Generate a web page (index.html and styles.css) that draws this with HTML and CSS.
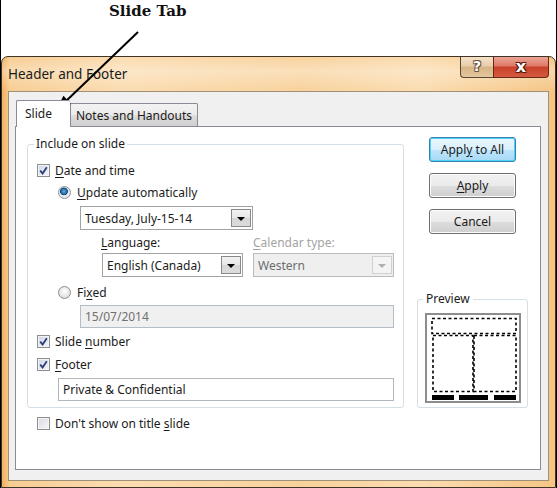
FILE: index.html
```html
<!DOCTYPE html>
<html>
<head>
<meta charset="utf-8">
<link rel="stylesheet" href="styles.css">
</head>
<body>
<div class="page">
  <div class="callout">Slide Tab</div>
  <div class="dialog">
    <div class="titlebar">
      <span class="title">Header and Footer</span>
      <div class="capbtns">
        <div class="capbtn help">?</div>
        <div class="capbtn close">x</div>
      </div>
    </div>
    <div class="client">
      <div class="tabs">
        <div class="tab active">Slide</div>
        <div class="tab">Notes and Handouts</div>
      </div>
      <div class="panel">
        <div class="leftcol">
          <fieldset class="group include">
            <legend>Include on slide</legend>
            <div class="row r-date"><span class="cb checked"><svg viewBox="0 0 9 9"><path d="M1.2 4.6 L3.6 7.4 L7.8 1.2" fill="none" stroke="#2b3f74" stroke-width="1.8"/></svg></span><span><u>D</u>ate and time</span></div>
            <div class="row indent r-update"><span class="rb selected"></span><span><u>U</u>pdate automatically</span></div>
            <div class="combo c-date"><span class="ctext">Tuesday, July-15-14</span><span class="cbtn"><i class="tri"></i></span></div>
            <div class="langgrid">
              <div class="lbl"><u>L</u>anguage:</div>
              <div class="lbl disabled"><u>C</u>alendar type:</div>
              <div class="combo"><span class="ctext">English (Canada)</span><span class="cbtn"><i class="tri"></i></span></div>
              <div class="combo disabled"><span class="ctext">Western</span><span class="cbtn"><i class="tri"></i></span></div>
            </div>
            <div class="row indent r-fixed"><span class="rb"></span><span>Fi<u>x</u>ed</span></div>
            <div class="textbox disabled t-fixed"><span>15/07/2014</span></div>
            <div class="row r-num"><span class="cb checked"><svg viewBox="0 0 9 9"><path d="M1.2 4.6 L3.6 7.4 L7.8 1.2" fill="none" stroke="#2b3f74" stroke-width="1.8"/></svg></span><span>Slide <u>n</u>umber</span></div>
            <div class="row r-footer"><span class="cb checked"><svg viewBox="0 0 9 9"><path d="M1.2 4.6 L3.6 7.4 L7.8 1.2" fill="none" stroke="#2b3f74" stroke-width="1.8"/></svg></span><span><u>F</u>ooter</span></div>
            <div class="textbox t-footer"><span>Private &amp; Confidential</span></div>
          </fieldset>
          <div class="row r-dont"><span class="cb"></span><span>Don't show on title <u>s</u>lide</span></div>
        </div>
        <div class="rightcol">
          <div class="btn default"><span>Appl<u>y</u> to All</span></div>
          <div class="btn"><span><u>A</u>pply</span></div>
          <div class="btn"><span>Cancel</span></div>
          <fieldset class="group preview">
            <legend>Preview</legend>
            <div class="pbox">
              <svg width="92" height="86" viewBox="0 0 92 86">
                <g fill="none" stroke="#000" stroke-width="1.6" stroke-dasharray="3 2.5">
                  <rect x="5" y="3.5" width="84" height="15"/>
                  <rect x="6" y="20.5" width="40" height="56"/>
                  <rect x="47" y="20.5" width="42" height="56"/>
                </g>
                <rect x="5" y="80" width="22" height="5" fill="#000"/>
                <rect x="32" y="80" width="29" height="5" fill="#000"/>
                <rect x="67" y="80" width="22" height="5" fill="#000"/>
              </svg>
            </div>
          </fieldset>
        </div>
      </div>
    </div>
  </div>
  <svg class="arrow" width="557" height="130" viewBox="0 0 557 130">
    <line x1="138" y1="32" x2="64" y2="103" stroke="#000" stroke-width="2"/>
    <polygon points="56,111 63.4,95.7 71.6,104.3" fill="#000"/>
  </svg>
</div>
</body>
</html>
```
FILE: styles.css
```css
* { box-sizing: border-box; }
html, body { margin: 0; padding: 0; }
body {
  width: 557px;
  height: 488px;
  background: #fff;
  font-family: "Noto Sans", "Open Sans", sans-serif;
  font-size: 12px;
  color: #1b1b1b;
  overflow: hidden;
}
u { text-decoration-thickness: 1px; text-underline-offset: 2px; }

.page {
  position: relative;
  height: 488px;
  display: flex;
  flex-direction: column;
  border-left: 1px solid #000;
  border-right: 1px solid #000;
}
.callout {
  height: 56px;
  padding: 2px 0 0 108px;
  font-family: "DejaVu Serif", "Liberation Serif", serif;
  font-weight: bold;
  font-size: 15px;
  color: #111;
}
.arrow { position: absolute; left: -1px; top: 0; pointer-events: none; }

.dialog {
  flex: 1;
  display: flex;
  flex-direction: column;
  border: 1px solid #3f3426;
  border-radius: 7px 7px 0 0;
  padding: 0 6px 6px 6px;
  background:
    linear-gradient(180deg, rgba(255,255,255,0) 0, rgba(255,255,255,0.3) 14px, rgba(255,255,255,0) 34px),
    linear-gradient(90deg, #f2b163 0, #f7cd92 8px, #fbdcb1 120px, #f8d29c 300px, #fbdcb0 420px, #f5c584 100%);
}
.titlebar {
  height: 34px;
  display: flex;
  justify-content: space-between;
}
.title {
  align-self: center;
  font-size: 13.5px;
  color: #1a1a1a;
}
.capbtns { display: flex; height: 21px; }
.capbtn {
  height: 21px;
  display: flex;
  align-items: center;
  justify-content: center;
  color: #fff;
  font-family: "DejaVu Sans", sans-serif;
  font-weight: bold;
  border: 1px solid #5a4632;
  border-top: none;
  padding-bottom: 2px;
}
.help {
  width: 33px;
  border-radius: 0 0 0 4px;
  border-right: none;
  background: linear-gradient(180deg, #f4e2c8 0, #e9ceaa 45%, #d7b485 50%, #e3c79e 100%);
  font-size: 14px;
  text-shadow: 1px 1px 0 #6b5540, -1px -1px 0 #6b5540, 1px -1px 0 #6b5540, -1px 1px 0 #6b5540;
}
.close {
  width: 56px;
  border-radius: 0 0 4px 0;
  border-color: #6a2619;
  background: linear-gradient(180deg, #eaa595 0, #df7866 45%, #c8412b 50%, #d45a3f 100%);
  font-size: 16px;
  text-shadow: 1px 1px 0 #5b1c10, -1px -1px 0 #5b1c10, 1px -1px 0 #5b1c10, -1px 1px 0 #5b1c10;
}

.client {
  flex: 1;
  border: 1px solid #a09078;
  background: #f0f0f0;
  padding: 8px 7px 10px 6px;
  display: flex;
  flex-direction: column;
}
.tabs {
  height: 26px;
  display: flex;
  align-items: flex-end;
  padding-left: 1px;
  position: relative;
  z-index: 1;
}
.tab {
  height: 23px;
  padding: 0 5px;
  display: flex;
  align-items: center;
  border: 1px solid #898c95;
  border-bottom: none;
  background: linear-gradient(180deg, #f3f3f3 0, #ebebeb 50%, #dddddd 51%, #cfcfcf 100%);
  border-radius: 2px 2px 0 0;
}
.tab.active {
  height: 27px;
  margin-bottom: -1px;
  padding: 0 18px 2px 8px;
  background: #fff;
  border-right: none;
}
.panel {
  height: 344px;
  border: 1px solid #898c95;
  background: #fff;
  padding-left: 11px;
  display: flex;
  gap: 13px;
}
.leftcol { width: 377px; }
.rightcol { width: 111px; padding-top: 10px; display: flex; flex-direction: column; }

.group {
  margin: 0;
  border: 1px solid #d5dfe5;
  border-radius: 3px;
  min-inline-size: 0;
}
.group legend {
  line-height: 16px;
  padding: 0 2px;
  margin-left: -3px;
  color: #1b1b1b;
}
.include { margin-top: 9px; padding: 10px 9px 6px 9px; }

.row {
  display: flex;
  align-items: center;
  height: 17px;
  gap: 5px;
  white-space: nowrap;
}
.indent { margin-left: 21px; }
.cb {
  width: 13px;
  height: 13px;
  flex: none;
  border: 1px solid #8e8f8f;
  background: linear-gradient(135deg, #d9dbe3 0, #f6f6f8 100%);
  box-shadow: inset 0 0 0 1px #f4f4f4;
  display: flex;
  align-items: center;
  justify-content: center;
}
.cb svg { width: 9px; height: 9px; }
.cb.checked { background: linear-gradient(135deg, #cfd5ea 0, #f3f4fa 100%); }
.rb {
  width: 13px;
  height: 13px;
  flex: none;
  border-radius: 50%;
  border: 1px solid #8e8f8f;
  background: radial-gradient(circle at 50% 40%, #ffffff 0, #e4e4e4 60%, #cfcfcf 100%);
}
.rb.selected {
  background: radial-gradient(circle at 45% 40%, #6fb4e6 0, #2a74b0 2.2px, #174a7c 3.6px, #dfe7ee 4.2px, #f4f4f4 100%);
}
.r-update { margin-top: 5px; gap: 6px; }
.combo {
  height: 24px;
  border: 1px solid #a2a3a6;
  background: #fff;
  display: flex;
  align-items: center;
  justify-content: space-between;
  padding: 0 0 0 4px;
}
.c-date { margin: 5px 0 0 43px; width: 173px; }
.cbtn {
  width: 20px;
  height: 18px;
  margin-right: 1px;
  border: 1px solid #8a8a8a;
  background: linear-gradient(180deg, #f2f2f2 0, #e6e6e6 50%, #d6d6d6 51%, #dcdcdc 100%);
  display: flex;
  align-items: center;
  justify-content: center;
}
.tri {
  width: 0;
  height: 0;
  border-left: 4px solid transparent;
  border-right: 4px solid transparent;
  border-top: 4px solid #000;
  margin-top: 1px;
}
.langgrid {
  margin: 4px 0 0 64px;
  display: grid;
  grid-template-columns: 141px 141px;
  column-gap: 11px;
  row-gap: 2px;
}
.lbl { height: 17px; line-height: 17px; }
.lbl.disabled { color: #a3a3a3; }
.langgrid .combo { margin-left: 1px; width: 141px; }
.langgrid .combo.disabled { margin-left: 0; }
.combo.disabled {
  background: #efefef;
  border-color: #b5bcc2;
  color: #6d6d6d;
}
.combo.disabled .cbtn {
  border-color: #d0d0d0;
  background: #f4f4f4;
}
.combo.disabled .tri { border-top-color: #b0b0b0; }
.r-fixed { margin-top: 7px; gap: 6px; }
.textbox {
  height: 23px;
  border: 1px solid #b3b6bd;
  display: flex;
  align-items: center;
  padding-left: 4px;
  background: #fff;
}
.textbox.disabled {
  background: #f0f0f0;
  border-color: #b4bcc5;
  color: #707070;
}
.t-fixed { margin: 4px 0 0 43px; width: 314px; }
.r-num { margin-top: 5px; }
.r-footer { margin-top: 6px; }
.t-footer { margin: 5px 0 0 21px; width: 336px; }
.r-dont { margin: 7px 0 0 10px; }

.btn {
  margin-left: 12px;
  width: 87px;
  height: 25px;
  border: 1px solid #707070;
  border-radius: 3px;
  background: linear-gradient(180deg, #f2f2f2 0, #ebebeb 50%, #dddddd 51%, #cfcfcf 100%);
  box-shadow: inset 0 0 0 1px #fcfcfc;
  display: flex;
  align-items: center;
  justify-content: center;
}
.btn + .btn { margin-top: 11px; }
.btn.default {
  border-color: #3c7fb1;
  background: linear-gradient(180deg, #eaf6fd 0, #d9f0fc 50%, #bee6fd 51%, #a7d9f5 100%);
  box-shadow: inset 0 0 0 1px #48d2f4;
}
.preview { margin-top: 57px; padding: 6px 6px 4px 7px; }
.preview legend { margin-left: -2px; padding: 0 3px; }
.pbox {
  width: 96px;
  height: 90px;
  border: 2px solid #8d8d8d;
  background: #fff;
}
.pbox svg { display: block; }
```
